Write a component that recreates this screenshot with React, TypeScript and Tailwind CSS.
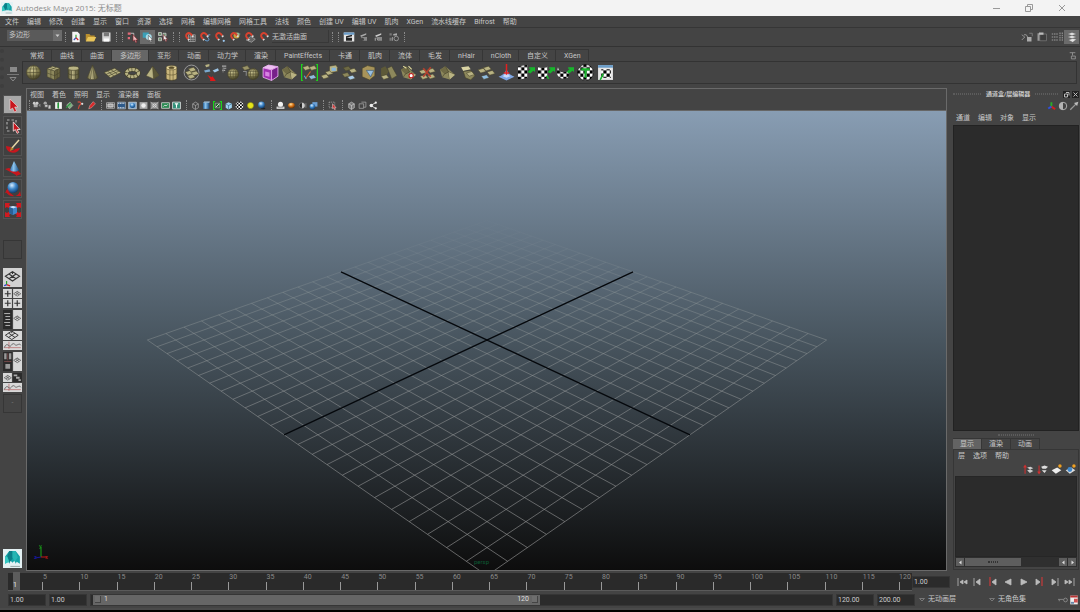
import type { ReactNode } from 'react'
import clsx from 'clsx'

const MENUS = [
  '文件', '编辑', '修改', '创建', '显示', '窗口', '资源', '选择', '网格', '编辑网格', '网格工具', '法线', '颜色',
  '创建 UV', '编辑 UV', '肌肉', 'XGen', '流水线缓存', 'Bifrost', '帮助',
]

const SHELF_TABS = [
  '常规', '曲线', '曲面', '多边形', '变形', '动画', '动力学', '渲染', 'PaintEffects', '卡通', '肌肉', '流体', '毛发',
  'nHair', 'nCloth', '自定义', 'XGen',
]

const OLIVE = '#8d885c'
const LIGHT = '#b9b383'
const DARK = '#45422a'

function Defs() {
  return (
    <svg className="absolute h-0 w-0" aria-hidden="true">
      <defs>
        <radialGradient id="olive" cx="0.4" cy="0.3" r="0.7">
          <stop offset="0" stopColor="#d2cb98" />
          <stop offset="0.6" stopColor="#8b8556" />
          <stop offset="1" stopColor="#3f3c24" />
        </radialGradient>
        <radialGradient id="blue" cx="0.4" cy="0.3" r="0.7">
          <stop offset="0" stopColor="#d6edff" />
          <stop offset="0.5" stopColor="#3f87c9" />
          <stop offset="1" stopColor="#123f70" />
        </radialGradient>
        <radialGradient id="orange" cx="0.4" cy="0.3" r="0.7">
          <stop offset="0" stopColor="#ffe0a0" />
          <stop offset="0.5" stopColor="#d9791b" />
          <stop offset="1" stopColor="#6a3000" />
        </radialGradient>
        <linearGradient id="cyl" x1="0" x2="1">
          <stop offset="0" stopColor="#5d5938" />
          <stop offset="0.4" stopColor="#b8b182" />
          <stop offset="1" stopColor="#4d4a2d" />
        </linearGradient>
        <linearGradient id="steel" x1="0" x2="1">
          <stop offset="0" stopColor="#2b6ca8" />
          <stop offset="0.4" stopColor="#8cc4ee" />
          <stop offset="1" stopColor="#154a80" />
        </linearGradient>
        <pattern id="checker" width="6" height="6" patternUnits="userSpaceOnUse">
          <path d="M0 0h6v6H0z" fill="#fff" />
          <path d="M0 0h3v3H0zM3 3h3v3H3z" fill="#000" />
        </pattern>
      </defs>
    </svg>
  )
}

function Icon({ children, className = 'h-4 w-4' }: { children: ReactNode; className?: string }) {
  return (
    <svg viewBox="0 0 16 16" className={className} fill="none" aria-hidden="true">
      {children}
    </svg>
  )
}

// small tilted polygon face used all over the shelf
function Tile({ x, y, fill = LIGHT }: { x: number; y: number; fill?: string }) {
  return <path d="M0 1.5 5 0l2.500 3-5 1.500z" transform={`translate(${x} ${y})`} fill={fill} stroke={DARK} strokeWidth=".5" />
}

function Mesh() {
  return (
    <>
      <path d="M1 5.500 6 2l9 8-5 4.500-7-2z" fill={OLIVE} />
      <path d="M1 5.500 6 2l3 5.500-4 2z" fill="#6f6a45" />
      <path d="M6 2l3 5.500 6 2.500M5 9.500l4-2 1 7M3 12.500l2-3" stroke={DARK} strokeWidth=".6" />
      <path d="M9 7.500l6 2.500-5 4.500z" fill={LIGHT} />
    </>
  )
}

function Cube({ a, b, c, line }: { a: string; b: string; c: string; line: string }) {
  return (
    <>
      <path d="M2 4.500 7 2l7 2-5 2.500z" fill={a} />
      <path d="M2 4.500l7 2V15l-7-3z" fill={b} />
      <path d="M9 6.500 14 4v8l-5 3z" fill={c} />
      <path d="M2 4.500 7 2l7 2v8l-5 3-7-3zM2 4.500l7 2L14 4M9 6.500V15M5.500 5.500v8M2 8.500l7 2.500 5-3M11.500 5.300v8.200M4.500 3.200l7 2.100M5.500 5.500l5-2.500" stroke={line} strokeWidth=".5" />
    </>
  )
}

function Sphere({ x, y, r }: { x: number; y: number; r: number }) {
  return (
    <g stroke={DARK} strokeWidth=".5">
      <circle cx={x} cy={y} r={r} fill="url(#olive)" />
      <ellipse cx={x} cy={y} rx={r / 2} ry={r} />
      <path d={`M${x - r} ${y}h${2 * r}M${x} ${y - r}v${2 * r}`} />
      <path d={`M${x - r * 0.85} ${y - r / 2}h${r * 1.7}M${x - r * 0.85} ${y + r / 2}h${r * 1.7}`} />
    </g>
  )
}

const GREEN_ARROW = 'M9 7.500l3-3h-1.500V3H16v4.500l-1.500-1.200L11.500 9z'

const SHELF_ICONS: [string, ReactNode][] = [
  ['球体', <Sphere x={8} y={8} r={6.6} />],
  ['立方体', <Cube a={LIGHT} b={OLIVE} c="#68633f" line={DARK} />],
  ['圆柱体', <g stroke={DARK} strokeWidth=".6"><path d="M3 4v8.500c0 3 10 3 10 0V4" fill="url(#cyl)" /><ellipse cx="8" cy="4" rx="5" ry="2" fill={LIGHT} /><path d="M3 8.500c0 2.500 10 2.500 10 0M6 6v8.500M10 6v8.500" /></g>],
  ['圆锥体', <g stroke={DARK} strokeWidth=".5"><path d="M8 1 3 13c1 2.200 9 2.200 10 0z" fill="url(#cyl)" /><path d="M8 1 6 14.400M8 1l2 13.400" /></g>],
  ['平面', <g stroke={DARK} strokeWidth=".6"><path d="M0 8l10-4L16 8 6 13z" fill={LIGHT} /><path d="M3.300 6.700l6 4.500M6.600 5.400l6 4M2 9.700l10-4M4 11.300l10-4.500" /></g>],
  ['圆环', <><ellipse cx="8" cy="8.500" rx="5.700" ry="3.400" stroke={DARK} strokeWidth="4" /><ellipse cx="8" cy="8.500" rx="5.700" ry="3.400" stroke={LIGHT} strokeWidth="2.800" strokeDasharray="2.400 .6" /></>],
  ['棱锥', <g stroke={DARK} strokeWidth=".5"><path d="M8 2 2 11l7 3 5-3.500z" fill={LIGHT} /><path d="M8 2l1 12 5-3.500z" fill="#5b5738" /></g>],
  ['管道', <g stroke="#4f4526" strokeWidth=".5"><path d="M3 3.500v10c0 2.500 10 2.500 10 0v-10" fill="#c8b57b" /><ellipse cx="8" cy="3.500" rx="5" ry="2" fill="#e2d29a" /><ellipse cx="8" cy="3.500" rx="2.500" ry="1" fill="#5b4f2b" /><path d="M3 8.500c0 2.500 10 2.500 10 0M6.500 5.500v10M9.500 5.500v10" /></g>],
  ['平滑代理', <><circle cx="8" cy="8" r="7" stroke="#b5b5b5" strokeWidth=".7" /><Tile x={2} y={6} /><Tile x={5} y={3} /><Tile x={7.5} y={6.5} /><Tile x={4} y={9.5} /></>],
  ['雕刻', <><path d="M2 1l4-1v2L3 3z" fill={LIGHT} /><path d="M1 6l5-1 1 2-5 1z" fill="#7aa9cf" /><path d="M9 6l5-2 1 2-4 2z" fill="#9cc4e4" /><path d="M4 10l4 2.500 1-1 3 4.500H6.500l.5-1.500z" fill="#e01818" /></>],
  ['镜像几何体', <><Sphere x={10.5} y={9.5} r={5.2} /><path d="M0 2h4M1 4h3M0 6h3" stroke="#a9a9a9" strokeWidth="1" /><path d="M1 3v5" stroke="#777" /></>],
  ['复制面', <><Sphere x={10.5} y={9.5} r={5.2} /><Tile x={0} y={1.5} fill="#9a9468" /><path d="M1 7h3v4" stroke="#888" /></>],
  ['平滑', <><path d="M1 3.500 6 1l9 1.500v9L9 15.500l-8-3z" fill="#a02fb0" /><path d="M1 3.500 6 1l9 1.500-6 3z" fill="#eec0f2" /><path d="M9 5.500l6-3v9l-6 4z" fill="#77208a" /><path d="M1 3.500 6 1l9 1.500v9L9 15.500l-8-3zM1 3.500l8 2 6-3M9 5.500v10" stroke="#e7b4ee" strokeWidth=".8" /><path d="M3 7l4 1v4l-4-1z" fill="#d884e2" /></>],
  ['添加分段', <Mesh />],
  ['结合', <><path d="M2 0H.5v16H2M14 0h1.500v16H14" stroke="#1bd41b" strokeWidth="1.400" /><Tile x={1.5} y={1.5} /><Tile x={7.5} y={1.5} /><Tile x={7} y={10} fill="#8fbce0" /><path d="M4 14l5-7" stroke="#d0622a" /><path d="M3 11l2 3" stroke="#57a8d8" /></>],
  ['分离', <><Tile x={0} y={9.5} /><Tile x={4} y={6} /><path d="M8 2l6-1 1.500 2v4L9.500 8 8 6z" fill={LIGHT} stroke={DARK} strokeWidth=".5" /><path d="M10 3.500h4v3h-4z" fill="#86b6dd" /></>],
  ['提取', <><Tile x={2} y={2} fill="#6d6944" /><Tile x={7.5} y={4} /><Tile x={1} y={8} fill={OLIVE} /><Tile x={6} y={10.5} fill="#aacdeb" /></>],
  ['布尔', <><path d="M2 4l5-2.500 7 1.500v8l-5 4-7-3z" fill="#a8945a" stroke={DARK} strokeWidth=".6" /><path d="M6 6h7l-3 6z" fill="#9ac1e2" stroke="#3b5a78" strokeWidth=".6" /></>],
  ['拉伸', <><path d="M1 4l4-2 3 5-3 6-4-2z" fill="#5d5938" /><path d="M7 4l4-2 5 9-5 3z" fill={OLIVE} stroke={DARK} strokeWidth=".5" /><Tile x={1} y={10} /></>],
  ['合并', <><Mesh /><circle cx="10.500" cy="11" r="2" fill="#fff" stroke="#c01818" /><path d="M3 2l3 2M8 2l3 3" stroke="#e6df9f" /></>],
  ['倒角', <><Tile x={0} y={5} /><Tile x={8} y={4} /><Tile x={1} y={10} /><Tile x={8} y={9.5} /><path d="M4 4l7 8M11 3 4 12" stroke="#b5412e" strokeWidth="1.500" /></>],
  ['桥接', <Mesh />],
  ['填充洞', <><path d="M2 3l7-1 2 3-7 1.500z" fill="#d9d3a4" /><path d="M4 7l7-1 4 5-4 4-5-2z" fill={OLIVE} stroke={DARK} strokeWidth=".6" /><Tile x={7} y={7} /></>],
  ['切割面', <><Tile x={0} y={4} /><Tile x={5} y={2} /><Tile x={8.5} y={6} /><Tile x={3} y={10} fill="#8fbce0" /></>],
  ['软选择', <><path d="M8 2c0 6 2.500 7.500 7.500 10L8 15.500.5 12C5.500 9.500 8 8 8 2z" fill="#7fa6e4" /><path d="M8 2c0 6-1 7-3.500 9.500L8 13l3.500-1.500C9 9.500 8 7 8 2z" fill="#c8d8f8" /><path d="M8 0v10M5.500 8.500h5" stroke="#e02020" strokeWidth="1.400" /></>],
  ['平面映射', <><path d="M0 2l9-1v12l-9 2z" fill="url(#checker)" /><path d={GREEN_ARROW} fill="#18b52c" /></>],
  ['圆柱映射', <><path d="M0 2c2 2 6 2 9 0v10c-3 3-7 3-9 0z" fill="url(#checker)" /><path d={GREEN_ARROW} fill="#18b52c" /><path d="M8 11l2 3" stroke="#18b52c" strokeWidth="1.500" /></>],
  ['球形映射', <><path d="M1 2c0 5 3 7 10 5v5c-5 4-11 1-11-4z" fill="url(#checker)" /><path d={GREEN_ARROW} fill="#18b52c" /></>],
  ['自动映射', <><circle cx="8" cy="8" r="7.500" fill="url(#checker)" stroke="#000" strokeWidth=".5" /><path d="M4 5h8M8 5v8" stroke="#18b52c" strokeWidth="2" /></>],
  ['UV 纹理编辑器', <><path d="M1 1h14v14H1z" fill="#e6e6e6" /><path d="M1 1h14v2.500H1z" fill="#6a9cc8" /><path d="M4 5h9v8H4z" fill="url(#checker)" /><path d="M3 15l3-6" stroke="#18b52c" strokeWidth="1.500" /></>],
]

function Magnet({ children }: { children?: ReactNode }) {
  return (
    <>
      {children}
      <g transform="rotate(-40 7 7)">
        <path d="M3.500 9V6a3.500 3.500 0 017 0v3" stroke="#d8422f" strokeWidth="2.600" />
        <path d="M3.500 9v2M10.500 9v2" stroke="#ddd" strokeWidth="2.600" />
      </g>
    </>
  )
}

const CURSOR = 'M5 1v11l2.500-2 2 4.500 2-1L9.500 10H13z'

const FILE_ICONS: [string, ReactNode][] = [
  ['新建场景', <><path d="M3 1h7l3 3v11H3z" fill="#f4f4f4" /><path d="M8 5v4" stroke="#28a028" strokeWidth="1.500" /><path d="M8 9l-3 3" stroke="#2850c0" strokeWidth="1.500" /><path d="M8 9l3 3" stroke="#d02020" strokeWidth="1.500" /></>],
  ['打开场景', <><path d="M1 4h5l1.500 2H13v7H1z" fill="#b98f2e" /><path d="M4 8h11l-3 6H1z" fill="#e8c45a" /></>],
  ['保存场景', <><path d="M3 2h11v12H3z" fill="#d4d4d4" /><path d="M5 2h7v5H5z" fill="#777" /><path d="M5 10h7v4H5z" fill="#fafafa" /></>],
]
const SELECT_ICONS: [string, ReactNode][] = [
  ['按层次选择', <><path d="M1 2h4v3H1zM1 8h3v3H1z" fill="#e06a78" /><path d="M5 3h4v4" stroke="#ddd" /><path d={CURSOR} transform="translate(4 4) scale(.8)" fill="#e9b7bb" stroke="#7a1d22" /></>],
  ['按对象类型选择', <><path d="M1 2h8v7H1z" fill="#3ba0b8" /><circle cx="9" cy="8" r="4" fill="#a7dbe8" /><path d={CURSOR} transform="translate(5 5) scale(.7)" fill="#fff" stroke="#444" /></>],
  ['按组件类型选择', <><path d="M2 2h4v4H2zM8 3h4v4H8zM2 9h4v4H2z" fill="#6f936f" stroke="#cfcfcf" /><path d={CURSOR} transform="translate(5 4) scale(.7)" fill="#eee" stroke="#7a1d22" /></>],
]
const SNAP_ICONS: [string, ReactNode][] = [
  ['捕捉到栅格', <Magnet><path d="M6 5h9v9H6zM9 5v9M12 5v9M6 8h9M6 11h9" stroke="#bbb" strokeWidth=".8" /></Magnet>],
  ['捕捉到曲线', <Magnet><path d="M8 12c4 3 7 0 4-3s1-4 3-4" stroke="#6aa7e0" strokeWidth="1.300" /></Magnet>],
  ['捕捉到点', <Magnet><circle cx="13" cy="13" r="1.500" fill="#9cc8f0" /></Magnet>],
  ['捕捉到投影中心', <Magnet><circle cx="10" cy="6" r="4" fill="#c9a13b" /><path d="M12 2v6M9 4h6" stroke="#8cc" /></Magnet>],
  ['捕捉到视图平面', <Magnet><path d="M3 12l6-5 6 4-5 4z" stroke="#bbb" fill="#666" strokeWidth=".8" /></Magnet>],
  ['激活选定对象', <Magnet />],
]
const RENDER_ICONS: [string, ReactNode][] = [
  ['打开渲染视图', <><path d="M1 2h14v12H1z" fill="#e6e6e6" /><path d="M1 2h14v3H1z" fill="#6a9cc8" /><path d="M4 7l8-2v2l-8 2zM4 9h8v4H4z" fill="#222" /></>],
  ['渲染当前帧', <><path d="M3 6l8-3v2L4 8z" fill="#aaa" /><path d="M4 8h8v5H6z" fill="#888" /><circle cx="6" cy="11" r="2" fill="#444" /></>],
  ['IPR 渲染', <><path d="M3 6l8-3v2L4 8z" fill="#ccc" /><path d="M5 8h7v5H8z" fill="#888" /><path d="M3 9v4M5 9l2 4" stroke="#ccc" /></>],
  ['渲染设置', <><path d="M2 3h3v3H2zM2 9h3v4H2z" fill="#777" /><path d="M7 4l5-1v3H7z" fill="#aaa" /><circle cx="11" cy="10" r="3" stroke="#aaa" /><path d="M6 8v5" stroke="#aaa" /></>],
]
const SIDEBAR_ICONS: [string, ReactNode][] = [
  ['建模工具包', <><path d="M1 5l4 3-4 4M4 5h3l3 5" stroke="#aaa" /><path d="M8 8h6v6H8z" fill="#aaa" /><path d="M11 3h4v4" stroke="#888" /></>],
  ['属性编辑器', <><path d="M2 3h4v10H2z" fill="#999" /><path d="M5 4h9v9H5z" stroke="#777" fill="#3d3d3d" /><path d="M4 2h6v3H4z" fill="#bbb" /></>],
  ['工具设置', <path d="M1 4h8M1 8h8M1 12h8M12 2v12M15 2v12" stroke="#bbb" strokeDasharray="2 1" />],
  ['通道盒', <path d="M2 4l6-2 6 2-6 2zM2 8l6-2 6 2-6 2zM3 12l6-2 5 1-5 4z" fill="#e4e4e4" stroke="#555" strokeWidth=".5" />],
]

const PANEL_ICON_GROUPS: [string, ReactNode][][] = [
  [
    ['选择摄影机', <><path d="M3 5h7v6H3z" fill="#aaa" /><circle cx="4" cy="4" r="2.500" fill="#ccc" /><circle cx="9" cy="4" r="2.500" fill="#ccc" /><path d="M11 7l4-2v6z" fill="#888" /></>],
    ['摄影机属性', <><circle cx="4" cy="4" r="3" fill="#aaa" /><path d="M3 6h6v5H3zM9 7h5v7H9z" fill="#ccc" stroke="#444" /></>],
    ['书签', <><path d="M2 2h5v12H2z" fill="#eee" /><path d="M8 2h6v12H8z" fill="#f4f4f4" /><path d="M6 3h3v10H6z" fill="#279a3a" /></>],
    ['图像平面', <><path d="M3 7l6-5 5 6-6 6z" fill="#7fae7f" stroke="#bbb" /><path d="M2 12l8-8" stroke="#2e9a44" strokeWidth="2" /></>],
    ['二维平移', <><path d="M3 2c5-2 8 3 3 6l-2 6" stroke="#d04a3a" strokeWidth="2" /><circle cx="11" cy="5" r="2" fill="#ddd" /></>],
    ['油性铅笔', <path d="M11 1l4 4-7 7-5 2 2-6z" fill="#d62a2a" stroke="#eee" strokeWidth=".6" />],
  ],
  [
    ['栅格', <><path d="M1 8l7-5 7 5-7 5z" fill="#999" /><path d="M1 3h14v10H1zM1 6h14M1 10h14M5 3v10M11 3v10" stroke="#ddd" /></>],
    ['胶片门', <><path d="M1 2h14v12H1z" fill="#2e5a8a" stroke="#ccc" /><path d="M2 4h12M2 12h12" stroke="#eee" strokeDasharray="2 1" strokeWidth="2" /></>],
    ['分辨率门', <><path d="M1 2h14v12H1z" fill="#7fa8cf" stroke="#ddd" /><circle cx="8" cy="8" r="4.500" fill="url(#blue)" /></>],
    ['门遮罩', <><path d="M1 2h14v12H1z" fill="#aaa" /><circle cx="8" cy="8" r="4" fill="#eee" /></>],
    ['区域图', <><path d="M1 2h14v12H1z" fill="#888" /><path d="M1 2l14 12M15 2L1 14" stroke="#ddd" /><circle cx="8" cy="8" r="3" stroke="#fff" /></>],
    ['安全动作', <><path d="M1 3h14v10H1z" fill="#2a8a52" stroke="#ccc" strokeWidth="1.500" /><path d="M4 10l3-3 2 2 3-3" stroke="#e4e4e4" strokeWidth="1.500" /></>],
    ['安全标题', <><path d="M1 2h14v12H1z" fill="#2f8f78" stroke="#ddd" strokeWidth="1.500" /><path d="M5 5h6M8 5v7" stroke="#fff" strokeWidth="2" /></>],
  ],
  [
    ['线框', <path d="M3 5l5-3 5 3v7l-5 3-5-3zM3 5l5 3 5-3M8 8v7" stroke="#c4c4c4" />],
    ['平滑着色', <><path d="M2 3h11v11H2z" fill="url(#steel)" /><path d="M2 3l2-2h10l-1 2z" fill="#a5cdee" /></>],
    ['默认材质', <><path d="M4 1H1v14h3M12 1h3v14h-3" stroke="#1bd41b" strokeWidth="2" /><path d="M4 4h8v8H4z" fill="#24642c" stroke="#bbb" /><path d="M5 11l6-6" stroke="#eee" strokeWidth="1.500" /></>],
    ['着色线框', <><path d="M3 5l5-3 6 3v7l-6 3-5-3z" fill="#9cd0ee" /><path d="M3 5l5 3 6-3M8 8v7" stroke="#2a5878" /></>],
    ['带纹理', <path d="M8 1a7 7 0 100 14A7 7 0 008 1z" fill="url(#checker)" />],
    ['使用所有灯光', <circle cx="8" cy="8" r="5.500" fill="#e4e41a" stroke="#8a8a10" />],
    ['阴影', <><ellipse cx="11" cy="13" rx="4" ry="1.500" fill="#222" /><circle cx="8" cy="7" r="6" fill="url(#blue)" /></>],
  ],
  [
    ['屏幕空间环境光遮挡', <><path d="M1 10h14v4H1z" fill="#ddd" /><circle cx="8" cy="6" r="4.500" fill="#f2f2f2" /><path d="M3 11h10" stroke="#555" /></>],
    ['运动模糊', <ellipse cx="8" cy="8" rx="6" ry="5" fill="url(#orange)" />],
    ['多重采样', <><circle cx="7" cy="8" r="5" fill="#222" stroke="#888" /><path d="M7 3a5 5 0 010 10z" fill="#ccc" /><path d="M14 4v8" stroke="#aaa" /></>],
    ['景深', <><path d="M6 2h9v8H6z" fill="#6c9fd4" /><circle cx="6" cy="10" r="5" fill="url(#blue)" /></>],
  ],
  [['隔离选择', <><path d="M2 2h10v10H2z" stroke="#ccc" strokeDasharray="2 1.500" /><path d={CURSOR} transform="translate(4 4) scale(.8)" fill="#d62a2a" stroke="#eee" /></>]],
  [
    ['X 射线', <><path d="M3 5l5-3 5 3v7l-5 3-5-3z" fill="#777" stroke="#ddd" /><path d="M3 5l5 3 5-3M8 8v7" stroke="#ddd" /></>],
    ['X 射线活动组件', <path d="M2 5h8v8H2zM6 2h8v9h-4" stroke="#aaa" strokeWidth="1.300" />],
    ['X 射线关节', <><path d="M3 8l9-5M3 8l9 5" stroke="#eee" strokeWidth="1.500" /><circle cx="4" cy="8" r="3" fill="#eee" /><circle cx="12" cy="3" r="2" fill="#eee" /><circle cx="12" cy="13" r="2" fill="#eee" /></>],
  ],
]

const TOOLS: [string, ReactNode][] = [
  ['选择工具', <path d="M5 2v11l2.500-2 2 4 2-1L9.700 10H13z" fill="#c8161d" stroke="#f2d6d6" strokeWidth=".6" />],
  ['套索工具', <><path d="M2 2h9v4M2 4v9h4" stroke="#aaa" strokeDasharray="2.500 2" strokeWidth="1.200" /><path d={CURSOR} transform="translate(4 3) scale(.85)" fill="#c8161d" stroke="#f0e0e0" /></>],
  ['绘制选择工具', <><path d="M1 7c0 8 12 9 14 2l-5 1c-2 3-6 1-4-2z" fill="#c8161d" /><path d="M14 1L7 9" stroke="#e8d8a8" strokeWidth="1.500" /><path d="M6 8l3 2-4 2z" fill="#b3872e" /></>],
  ['移动工具', <><path d="M0 9l4-1 8 4v-2l4 4-5 2v-1z" fill="#c8161d" /><path d="M9 1L5 10c1 2 8 2 9 0z" fill="url(#steel)" /></>],
  ['旋转工具', <><path d="M1 9c0 7 12 9 14 1l1 5H9" fill="#c8161d" /><path d="M0 12l3-5 3 4z" fill="#c8161d" /><circle cx="8" cy="6.500" r="5.500" fill="url(#blue)" /></>],
  ['缩放工具', <><path d="M0 1h5L4 3l3 3-2 1-3-2-2 1zM16 1v5l-2-1-3 2-2-1 3-3-1-2zM0 15v-5l2 1 3-2 2 2-3 2 1 2zM16 15h-5l1-2-3-2 2-2 3 2 2-1z" fill="#d01a20" /><path d="M4 5l4-1 4 1v6l-4 2-4-2z" fill="#3f87c9" /><path d="M4 5l4-1 4 1-4 1.500z" fill="#c9e4fa" /><path d="M4 5l4 1.500V13l-4-2z" fill="#2a6298" /></>],
]

function PerspGlyph({ x = 0, y = 0, s = 1 }: { x?: number; y?: number; s?: number }) {
  return (
    <path
      d="M0 4l6-4 6 4-6 4zM3 2l6 4M9 2L3 6M6 0v2"
      transform={`translate(${x} ${y}) scale(${s})`}
      stroke="#333"
      strokeWidth=".9"
    />
  )
}

const AXES = (
  <>
    <path d="M3 14v-3" stroke="#22a022" />
    <path d="M3 14l3 1" stroke="#d02020" />
    <path d="M3 14l-2 1" stroke="#2040d0" />
  </>
)

const GRAPH = (
  <>
    <path d="M1 14h14M5 9v6" stroke="#b05050" strokeWidth=".5" />
    <path d="M1 14c3-6 4 1 6-2s3 0 4 0 3-2 4 0" stroke="#555" strokeWidth=".7" />
  </>
)

const LAYOUTS: [string, ReactNode][] = [
  ['透视视图', <><path d="M0 0h16v16H0z" fill="#d2d2d2" /><PerspGlyph x={2} y={3} />{AXES}</>],
  ['四视图', <><path d="M0 0h7.500v7.500H0zM8.500 0H16v7.500H8.500zM0 8.500h7.500V16H0zM8.500 8.500H16V16H8.500z" fill="#d8d8d8" /><path d="M1.500 4h5M4 1.500v5M1.500 12h5M4 9.500v5M9.500 12h5M12 9.500v5" stroke="#333" /><PerspGlyph x={9} y={2} s={0.5} /></>],
  ['透视/大纲', <><path d="M0 0h7.500v16H0z" fill="#2b2b2b" /><path d="M1 3h5M2 5.500h4M2 8h4M1 10.500h5M2 13h4" stroke="#bbb" strokeWidth=".8" /><path d="M8.500 0H16v16H8.500z" fill="#d8d8d8" /><PerspGlyph x={9} y={5} s={0.5} /></>],
  ['透视/曲线图', <><path d="M0 0h16v7.500H0zM0 8.500h16V16H0z" fill="#d8d8d8" /><PerspGlyph x={2} y={0} s={0.9} />{GRAPH}</>],
  ['超图/透视', <><path d="M0 0h7.500v16H0z" fill="#2b2b2b" /><path d="M1 1h2v5H1zM5 1h2v5H5zM2 10h4v4H2z" fill="#999" /><path d="M4 1v6M1 8h6" stroke="#8a5050" strokeWidth=".6" /><path d="M8.500 0H16v16H8.500z" fill="#d8d8d8" /><PerspGlyph x={9} y={5} s={0.5} /></>],
  ['透视/超图/曲线图', <><path d="M0 0h7.500v7.500H0zM0 8.500h16V16H0z" fill="#d8d8d8" /><path d="M8.500 0H16v7.500H8.500z" fill="#2b2b2b" /><path d="M9 2h3M11 4h3M13 6h2" stroke="#aaa" strokeWidth="1.500" /><PerspGlyph x={1} y={2} s={0.5} />{GRAPH}</>],
]

function MayaLogo({ className }: { className: string }) {
  return (
    <svg viewBox="0 0 18 18" className={className} aria-hidden="true">
      <path d="M0 0h18v18H0z" fill="#e4f1f3" />
      <path d="M2 14V7l4-5h6l4 5v7l-3-2-1 2-1-3-2 2-2-2-1 3-1-2z" fill="#13a3a6" />
      <path d="M6 2h3v7l-3 4-2-6z" fill="#0b7f88" />
      <path d="M12 2l2 6-3 4-2-4V2z" fill="#26b5b3" />
      <path d="M2 14V7l2 0 2 5z" fill="#35c9c2" />
      <path d="M7 16.500h9" stroke="#9aa" strokeWidth="1" />
    </svg>
  )
}

function IconButton({ label, children, className }: { label: string; children: ReactNode; className?: string }) {
  return (
    <button aria-label={label} className={clsx('flex shrink-0 items-center justify-center', className)}>
      {children}
    </button>
  )
}

function StatusIcons({ items, active }: { items: [string, ReactNode][]; active?: number }) {
  return items.map(([label, art], i) => (
    <IconButton key={label} label={label} className={clsx('h-[14px] w-[15px]', i === active && 'bg-[#6b6b6b]')}>
      <Icon className="h-[12px] w-[12px]">{art}</Icon>
    </IconButton>
  ))
}

function Divider({ className = 'w-[6px]' }: { className?: string }) {
  return (
    <span className={clsx('flex shrink-0 justify-center', className)}>
      <span className="h-[10px] border-l border-dotted border-[#8a8a8a]" />
    </span>
  )
}

function TitleBar() {
  return (
    <header className="flex h-4 shrink-0 items-center bg-[#f3f3f3] pr-[2px] pl-px text-[#8c8c8c]">
      <MayaLogo className="h-[12px] w-[12px]" />
      <h1 className="ml-[3px] flex-1 text-[8px] leading-4 font-[Open_Sans,Noto_Sans_CJK_SC,sans-serif]">
        Autodesk Maya 2015: 无标题
      </h1>
      <div className="flex">
        <IconButton label="最小化" className="h-4 w-[33px]">
          <svg viewBox="0 0 8 8" className="h-2 w-2" stroke="#999"><path d="M1 4.500h7" /></svg>
        </IconButton>
        <IconButton label="还原" className="h-4 w-[33px]">
          <svg viewBox="0 0 8 8" className="h-2 w-2" fill="none" stroke="#999"><path d="M.5 2.500h5v5h-5zM2.500 2V.5h5v5H6" /></svg>
        </IconButton>
        <IconButton label="关闭" className="h-4 w-[33px]">
          <svg viewBox="0 0 8 8" className="h-2 w-2" stroke="#999"><path d="M1 1l6 6M7 1L1 7" /></svg>
        </IconButton>
      </div>
    </header>
  )
}

function StatusLine() {
  return (
    <div className="flex h-[19px] shrink-0 items-center border-b border-[#333] pb-px pl-[7px]">
      <div className="relative mb-[2px] h-[11px] w-[55px]">
        <select aria-label="菜单集" className="h-full w-full appearance-none bg-[#5a5a5a] pl-[2px] leading-[11px]">
          <option>多边形</option>
        </select>
        <svg viewBox="0 0 9 11" className="pointer-events-none absolute top-0 right-0 h-full w-[9px]">
          <path d="M0 0h9v11H0z" fill="#6c6c6c" />
          <path d="M2.500 4.500h4l-2 2.500z" fill="#ccc" />
        </svg>
      </div>
      <Divider />
      <StatusIcons items={FILE_ICONS} />
      <Divider />
      <Divider />
      <StatusIcons items={SELECT_ICONS} active={1} />
      <Divider />
      <Divider />
      <StatusIcons items={SNAP_ICONS} />
      <input aria-label="激活曲面" readOnly value="无激活曲面" className="h-[13px] w-[57px] border-r border-b border-[#383838]" />
      <Divider />
      <Divider />
      <StatusIcons items={RENDER_ICONS} />
      <Divider />
      <div className="ml-auto flex pr-px">
        <StatusIcons items={SIDEBAR_ICONS} active={3} />
      </div>
    </div>
  )
}

function Shelf() {
  return (
    <section className="flex h-[41px] shrink-0 pt-[2px]">
      <div className="flex w-[22px] flex-col items-center border-l-4 border-dotted border-[#3e3e3e] pt-[18px]">
        <IconButton label="工具架标签" className="h-[5px] w-[7px] bg-[#8a8a8a]">{null}</IconButton>
        <span className="my-[2px] h-px w-3 bg-[#777]" />
        <IconButton label="工具架菜单">
          <svg viewBox="0 0 8 5" className="h-[5px] w-2" fill="none" stroke="#888"><path d="M1 .5h6L4 4z" /></svg>
        </IconButton>
      </div>
      <div className="min-w-0 flex-1 pr-[3px]">
        <div role="tablist" className="flex h-3 items-stretch">
          {SHELF_TABS.map((tab) => (
            <button
              key={tab}
              role="tab"
              aria-selected={tab === '多边形'}
              className={clsx(
                'shrink-0 border-t border-r border-[#363636] pr-[7px] pl-2 leading-[13px]',
                tab === '多边形' ? 'bg-[#666]' : 'bg-[#444]',
              )}
            >
              {tab}
            </button>
          ))}
          <IconButton label="删除工具架项目" className="ml-auto w-[10px]">
            <Icon className="h-[9px] w-[9px]"><path d="M3 3h10M8 3v5M6 9h7v5H6z" stroke="#999" strokeWidth="1.500" /></Icon>
          </IconButton>
        </div>
        <div className="h-[23px] border border-[#333] bg-[#444] pl-px">
          <div className="grid h-full w-[591px] grid-cols-[repeat(30,1fr)]">
            {SHELF_ICONS.map(([label, art]) => (
              <IconButton key={label} label={label}>
                <Icon className="h-[17px] w-[17px]">{art}</Icon>
              </IconButton>
            ))}
          </div>
        </div>
      </div>
    </section>
  )
}

function ToolBox() {
  return (
    <aside className="flex w-[26px] shrink-0 flex-col gap-[2px] pt-[7px] pb-[3px] pl-[3px]">
      {TOOLS.map(([label, art], i) => (
        <IconButton key={label} label={label} className={clsx('h-[19px] w-[19px] border border-[#525252]', i === 0 ? 'bg-[#a8a8a8]' : 'bg-[#404040]')}>
          <Icon>{art}</Icon>
        </IconButton>
      ))}
      <span className="h-[17px]" />
      <span className="mb-[7px] h-[19px] w-[19px] border border-[#363636]" />
      {LAYOUTS.map(([label, art]) => (
        <IconButton key={label} label={label} className="h-[19px] w-[19px]">
          <Icon className="h-[19px] w-[19px]">{art}</Icon>
        </IconButton>
      ))}
      <IconButton label="更多布局" className="h-[19px] w-[19px] border border-[#363636] text-[#777]">-</IconButton>
      <IconButton label="Maya 主页" className="mt-auto h-[19px] w-[19px]">
        <MayaLogo className="h-[19px] w-[19px]" />
      </IconButton>
    </aside>
  )
}

// perspective projection of the ground plane, u and v run from -1 to 1
function project(u: number, v: number) {
  const w = 1 - 0.1634 * (u + v)
  return [460 + (169.8 * (u - v)) / w, 229 + (79.3 * (u + v)) / w]
}

function segment(u1: number, v1: number, u2: number, v2: number) {
  const [x1, y1] = project(u1, v1)
  const [x2, y2] = project(u2, v2)
  return `M${x1.toFixed(1)} ${y1.toFixed(1)}L${x2.toFixed(1)} ${y2.toFixed(1)}`
}

function Grid() {
  const lines: string[] = []
  for (let i = -12; i <= 12; i++) {
    if (i === 0) continue
    lines.push(segment(i / 12, -1, i / 12, 1), segment(-1, i / 12, 1, i / 12))
  }
  return (
    <svg viewBox="0 0 919 459" preserveAspectRatio="xMidYMid slice" className="h-full w-full" fill="none" role="img" aria-label="透视栅格">
      <defs>
        <linearGradient id="gridFade" gradientUnits="userSpaceOnUse" x1="0" y1="110" x2="0" y2="459">
          <stop offset="0" stopColor="#85909a" stopOpacity="0.05" />
          <stop offset="0.2" stopColor="#98a09f" stopOpacity="0.4" />
          <stop offset="0.5" stopColor="#96999a" stopOpacity="0.65" />
          <stop offset="1" stopColor="#949494" stopOpacity="0.8" />
        </linearGradient>
      </defs>
      <path d={lines.join('')} stroke="url(#gridFade)" strokeWidth=".8" />
      <path d={segment(0, -1, 0, 1) + segment(-1, 0, 1, 0)} stroke="#05080c" strokeWidth="1.300" />
      <path d="M14 446v-10" stroke="#18a818" />
      <path d="M14 446h6" stroke="#c01818" />
      <path d="M14 446l-6 1" stroke="#1818a0" />
      <text x="12" y="437" fontSize="6" fill="#18a818">y</text>
      <text x="18" y="448" fontSize="6" fill="#c01818">x</text>
      <text x="7" y="448" fontSize="6" fill="#1818b0">z</text>
      <text x="447" y="453" fontSize="6" fill="#0c5a34">persp</text>
    </svg>
  )
}

function Viewport() {
  return (
    <section className="flex min-w-0 flex-1 flex-col border border-[#6a6a6a]">
      <nav className="flex h-[11px] shrink-0 items-end gap-2 pl-[3px] leading-[10px]">
        {['视图', '着色', '照明', '显示', '渲染器', '面板'].map((m) => (
          <button key={m}>{m}</button>
        ))}
      </nav>
      <div className="flex h-[11px] shrink-0 items-center border-b border-[#666]">
        {PANEL_ICON_GROUPS.map((group, i) => (
          <div key={i} className="flex items-center">
            <Divider className={i === 0 ? 'w-[4px]' : 'w-[8px]'} />
            {group.map(([label, art]) => (
              <IconButton key={label} label={label} className="w-[11px]">
                <Icon className="h-[9px] w-[9px]">{art}</Icon>
              </IconButton>
            ))}
          </div>
        ))}
      </div>
      <div className="min-h-0 flex-1 bg-linear-to-b/srgb from-[#889db3] via-[#48555f] to-[#0d0d0d]">
        <Grid />
      </div>
    </section>
  )
}

function Dots({ className }: { className: string }) {
  return <span className={clsx('h-[2px] border-y border-dotted border-[#5c5c5c]', className)} />
}

const LAYER_ICONS: [string, ReactNode][] = [
  ['上移层', <><path d="M3 14V2M1 5l2-3 2 3" stroke="#d03030" strokeWidth="1.500" /><path d="M6 5l5-1 4 2-5 2zM6 9l5-1 4 2-5 3z" fill="#ccc" /></>],
  ['下移层', <><path d="M3 2v12M1 11l2 3 2-3" stroke="#d03030" strokeWidth="1.500" /><path d="M6 4l5-2 5 2-3 3H8zM7 9h7l-3 4z" fill="#ddd" /></>],
  ['创建空层', <><path d="M1 9l8-4 6 4-8 5z" fill="#eee" /><circle cx="13" cy="3" r="2.500" fill="#f0a020" /></>],
  ['从选定对象创建层', <><path d="M1 9l8-4 6 4-8 5z" fill="#ddd" /><circle cx="7" cy="8" r="3.500" fill="#3f87c9" /><circle cx="13" cy="3" r="2.500" fill="#f0a020" /></>],
]

function ChannelPanel() {
  return (
    <aside className="flex w-[133px] shrink-0 flex-col pt-px pr-px pl-[6px]">
      <div className="flex h-[10px] items-center gap-[5px]">
        <Dots className="w-7" />
        <h2 className="text-[6px] leading-[10px] font-bold whitespace-nowrap">通道盒/层编辑器</h2>
        <Dots className="flex-1" />
        <div className="flex gap-[2px]">
          <IconButton label="浮动" className="h-[7px] w-[7px] bg-[#222]">
            <svg viewBox="0 0 7 7" className="h-[7px] w-[7px]" fill="none" stroke="#bbb"><path d="M1.500 3h3v3h-3zM3 1.500h3v3" /></svg>
          </IconButton>
          <IconButton label="关闭面板" className="h-[7px] w-[7px] bg-[#222]">
            <svg viewBox="0 0 7 7" className="h-[7px] w-[7px]" stroke="#bbb"><path d="M1.500 1.500l4 4M5.500 1.500l-4 4" /></svg>
          </IconButton>
        </div>
      </div>
      <div className="flex h-[13px] items-center justify-end gap-px">
        <IconButton label="操纵器"><Icon className="h-[10px] w-[10px]"><path d="M7 9V2" stroke="#28b028" strokeWidth="3" /><path d="M7 9l6 4" stroke="#d02020" strokeWidth="3" /><path d="M7 9l-5 3" stroke="#3050e0" strokeWidth="3" /></Icon></IconButton>
        <IconButton label="速度"><Icon className="h-[10px] w-[10px]"><circle cx="8" cy="8" r="6" stroke="#b5b5b5" strokeWidth="1.500" /><path d="M8 2a6 6 0 000 12z" fill="#b5b5b5" /></Icon></IconButton>
        <IconButton label="双曲线"><Icon className="h-[10px] w-[10px]"><path d="M2 14l9-9" stroke="#999" strokeWidth="2" /><path d="M8 3l7-2-2 7z" fill="#bbb" /></Icon></IconButton>
      </div>
      <nav className="flex h-[13px] items-center gap-2 pl-[3px]">
        {['通道', '编辑', '对象', '显示'].map((m) => (
          <button key={m}>{m}</button>
        ))}
      </nav>
      <div className="min-h-0 flex-1 border border-[#222] bg-[#2b2b2b]" />
      <div className="flex h-[7px] shrink-0 items-center justify-center"><Dots className="w-9" /></div>
      <div role="tablist" className="flex h-[11px] shrink-0">
        {['显示', '渲染', '动画'].map((tab, i) => (
          <button
            key={tab}
            role="tab"
            aria-selected={i === 0}
            className={clsx('border-t border-r border-[#363636] px-[7px] leading-[11px]', i === 0 ? 'bg-[#636363]' : 'bg-[#444]')}
          >
            {tab}
          </button>
        ))}
      </div>
      <div className="mb-px flex h-[121px] shrink-0 flex-col border border-[#363636] px-px pb-[2px]">
        <nav className="flex h-[13px] items-center gap-2 pl-[3px]">
          {['层', '选项', '帮助'].map((m) => (
            <button key={m}>{m}</button>
          ))}
        </nav>
        <div className="flex h-[13px] items-center justify-end gap-[3px] pr-px">
          {LAYER_ICONS.map(([label, art]) => (
            <IconButton key={label} label={label} className="w-[11px]">
              <Icon className="h-[11px] w-[11px]">{art}</Icon>
            </IconButton>
          ))}
        </div>
        <div className="flex-1 border border-[#262626] bg-[#2b2b2b]" />
        <div className="flex h-[10px] items-center gap-px bg-[#2f2f2f] px-px">
          <ScrollArrow label="向左滚动" d="M4.500 1.500v4L2 3.500z" />
          <div className="flex h-[8px] w-14 items-center justify-center bg-[#5e5e5e]"><Dots className="w-[10px] border-[#333]" /></div>
          <span className="flex-1" />
          <ScrollArrow label="左" d="M4.500 1.500v4L2 3.500z" />
          <ScrollArrow label="右" d="M2.500 1.500v4L5 3.500z" />
        </div>
      </div>
    </aside>
  )
}

function ScrollArrow({ label, d }: { label: string; d: string }) {
  return (
    <IconButton label={label} className="h-[8px] w-[8px] bg-[#5e5e5e]">
      <svg viewBox="0 0 7 7" className="h-[7px] w-[7px]" fill="#ddd"><path d={d} /></svg>
    </IconButton>
  )
}

const PLAYBACK: [string, string, string?][] = [
  ['转到播放范围开头', 'M2 1v8M4 5l3-2v4zM8 5l3-2v4z'],
  ['后退一帧', 'M3 1v8M5 5l4-3v6z'],
  ['后退一关键帧', 'M5 5l4-3v6z', 'M3 0v9'],
  ['向后播放', 'M3 5l6-3v6z'],
  ['向前播放', 'M9 5L3 2v6z'],
  ['前进一关键帧', 'M7 5L3 2v6z', 'M9 0v9'],
  ['前进一帧', 'M9 1v8M7 5L3 2v6z'],
  ['转到播放范围末尾', 'M10 1v8M8 5L5 3v4zM4 5L1 3v4z'],
]

function Field({ label, value }: { label: string; value: string }) {
  return (
    <input
      aria-label={label}
      defaultValue={value}
      className="h-[12px] w-[38px] shrink-0 border border-[#363636] bg-[#2b2b2b] pl-px text-[#ccc]"
    />
  )
}

function TimeSlider() {
  const frames = Array.from({ length: 23 }, (_, i) => (i + 1) * 5)
  return (
    <div className="flex h-5 shrink-0 items-center pt-px">
      <div className="relative ml-[8px] flex h-[18px] min-w-0 flex-1 border-b border-[#5a5a5a] bg-[#2a2a2a] text-[#8a8a8a]">
        <input
          type="range"
          aria-label="当前帧"
          min={1}
          max={120}
          defaultValue={1}
          className="absolute inset-0 h-full w-full appearance-none bg-transparent pl-[5px] [&::-webkit-slider-thumb]:h-[18px] [&::-webkit-slider-thumb]:w-[7px] [&::-webkit-slider-thumb]:appearance-none [&::-webkit-slider-thumb]:bg-[#5c5c5c]"
        />
        <span className="pointer-events-none z-10 flex w-[34px] shrink-0 items-end pl-[5px] leading-[9px] text-[#e4e4e4]">1</span>
        {frames.map((f) => (
          <span key={f} className="pointer-events-none flex flex-1 flex-col justify-between leading-[8px]">
            <span className="pl-px">{f}</span>
            <span className="h-[8px] border-l border-[#999]" />
          </span>
        ))}
        <span className="pointer-events-none flex w-[13px] shrink-0 flex-col justify-between leading-[8px]">
          <span>120</span>
          <span className="h-[8px] border-l border-[#999]" />
        </span>
      </div>
      <Field label="当前时间" value="1.00" />
      <div className="flex w-[130px] shrink-0 justify-between pr-[2px] pl-[4px]">
        {PLAYBACK.map(([label, d, red]) => (
          <IconButton key={label} label={label} className="h-3 w-[15px]">
            <svg viewBox="0 0 12 10" className="h-[10px] w-3" fill="#bbb" stroke="#bbb" aria-hidden="true">
              <path d={d} strokeWidth=".8" />
              {red && <path d={red} stroke="#c83a3a" strokeWidth="1.200" />}
            </svg>
          </IconButton>
        ))}
      </div>
    </div>
  )
}

function RangeSlider() {
  return (
    <div className="flex h-[17px] shrink-0 items-center gap-[3px] pl-[8px]">
      <Field label="动画开始时间" value="1.00" />
      <Field label="播放开始时间" value="1.00" />
      <div className="relative flex h-[12px] min-w-0 flex-1 items-center border border-[#363636] bg-[#2b2b2b]">
        <input
          type="range"
          aria-label="播放范围"
          defaultValue={0}
          className="h-[10px] w-full appearance-none bg-transparent pl-[2px] [&::-webkit-slider-thumb]:h-[10px] [&::-webkit-slider-thumb]:w-[447px] [&::-webkit-slider-thumb]:appearance-none [&::-webkit-slider-thumb]:bg-[#666]"
        />
        <div className="pointer-events-none absolute top-0 left-[4px] flex h-full w-[443px] items-center gap-[3px] text-[#ddd]">
          <span className="h-[7px] w-[6px] border-r border-b border-[#444] bg-[#6e6e6e]" />
          <span>1</span>
          <span className="ml-auto">120</span>
          <span className="h-[7px] w-[6px] border-r border-b border-[#444] bg-[#6e6e6e]" />
        </div>
      </div>
      <Field label="播放结束时间" value="120.00" />
      <Field label="动画结束时间" value="200.00" />
      {['无动画层', '无角色集'].map((text) => (
        <label key={text} className="flex w-[67px] shrink-0 items-center gap-[3px] pl-px">
          <svg viewBox="0 0 6 4" className="h-1 w-[6px]" fill="none" stroke="#777"><path d="M.5.5h5L3 3z" /></svg>
          <select aria-label={text} className="w-[50px] appearance-none leading-[11px]">
            <option>{text}</option>
          </select>
        </label>
      ))}
      <div className="flex gap-px pr-px">
        <IconButton label="自动关键帧">
          <Icon className="h-[10px] w-[10px]"><circle cx="12" cy="8" r="3" stroke="#888" strokeWidth="1.500" /><path d="M0 7h9M2 7v3" stroke="#888" strokeWidth="1.500" /></Icon>
        </IconButton>
        <IconButton label="动画首选项">
          <Icon className="h-[10px] w-[10px]"><path d="M2 1h12v14H2z" fill="#eee" /><path d="M2 1h12v3H2z" fill="#b33" /><path d="M8 6h6v6H8z" fill="#d05050" /><path d="M3 11h5v3H3z" fill="#68a" /></Icon>
        </IconButton>
      </div>
    </div>
  )
}

export default function App() {
  return (
    <div className="flex h-screen min-w-[900px] flex-col overflow-hidden bg-[#444] text-[7px] text-[#c8c8c8] font-[Roboto,Noto_Sans_CJK_SC,sans-serif]">
      <Defs />
      <TitleBar />
      <nav className="flex h-3 shrink-0 items-end gap-2 border-b border-[#363636] pl-[5px] leading-[10px]">
        {MENUS.map((m) => (
          <button key={m} className="shrink-0">{m}</button>
        ))}
      </nav>
      <StatusLine />
      <Shelf />
      <main className="flex min-h-0 flex-1">
        <ToolBox />
        <Viewport />
        <ChannelPanel />
      </main>
      <TimeSlider />
      <RangeSlider />
      <footer className="h-[4px] shrink-0 border-t-2 border-[#4a4a4a] bg-black" />
    </div>
  )
}
